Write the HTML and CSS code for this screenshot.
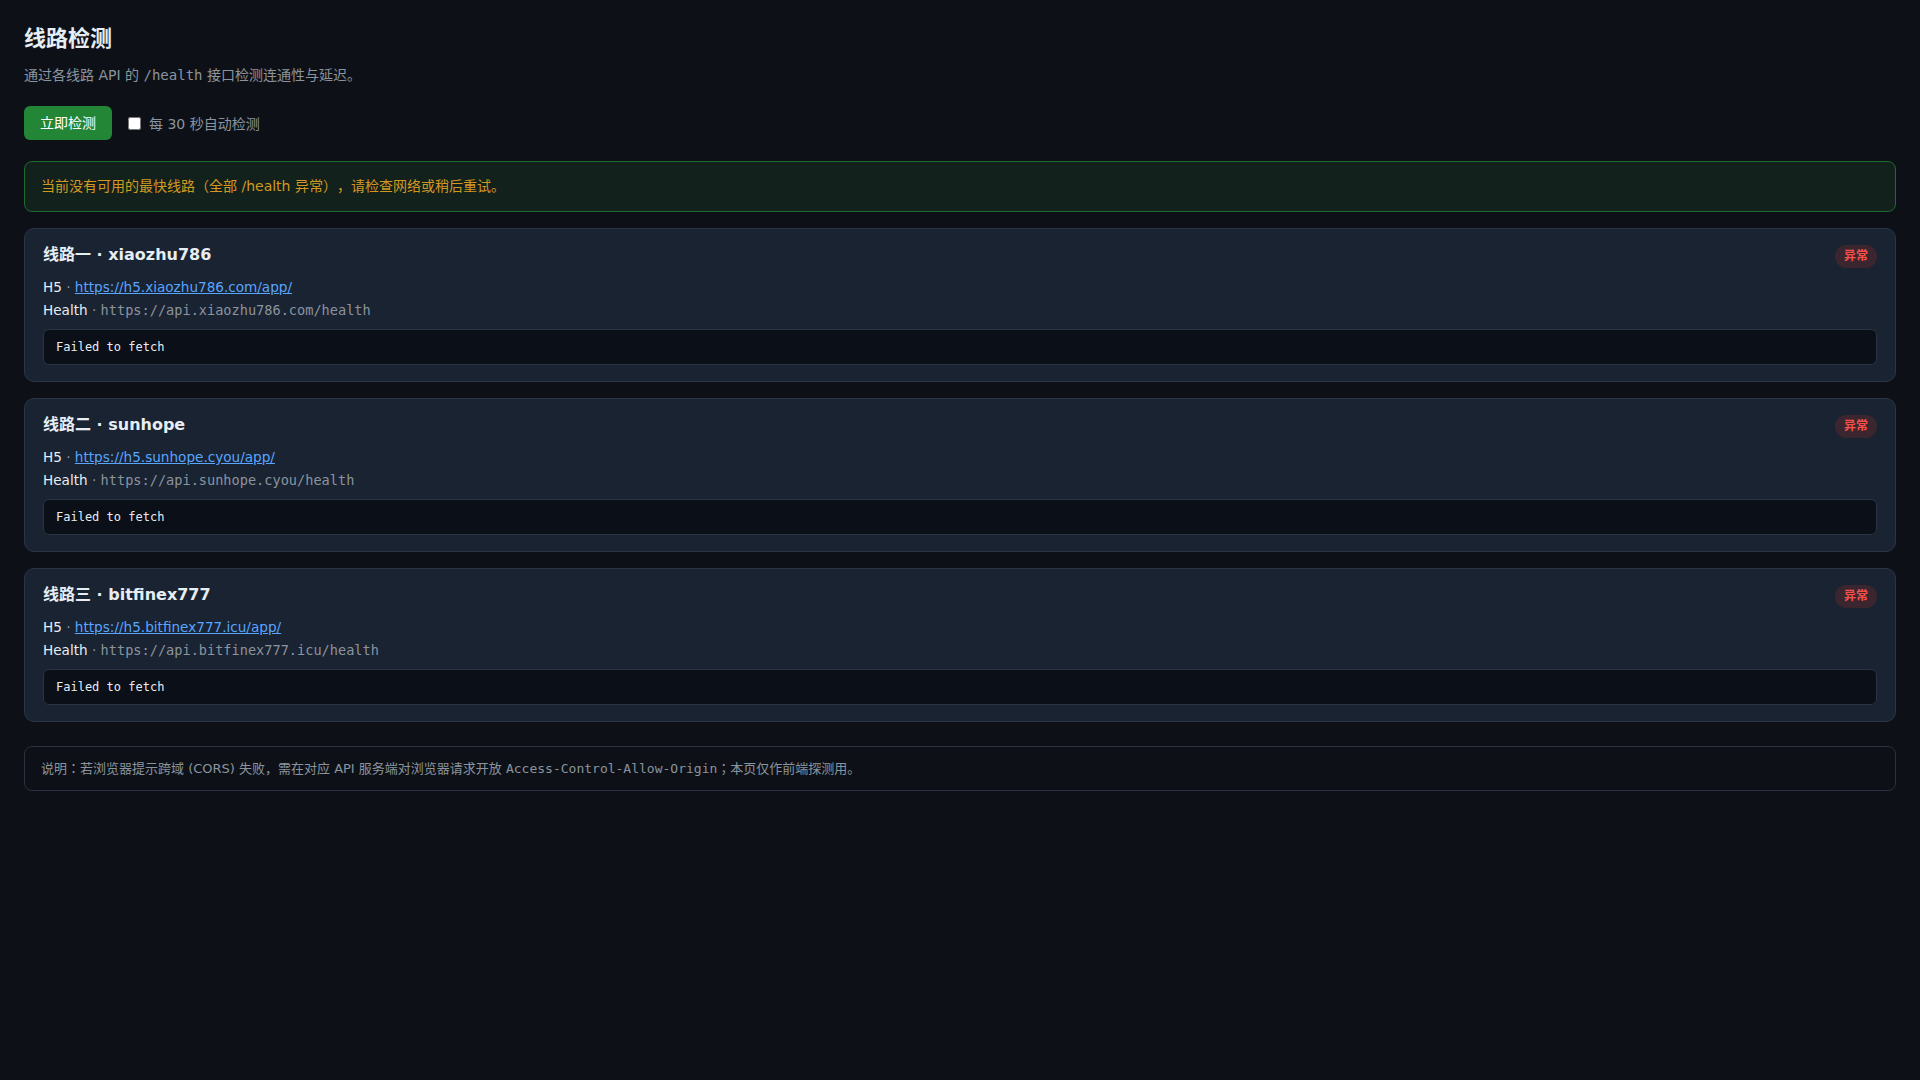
FILE: index.html
```html
<!DOCTYPE html>
<html lang="en">

<head>
    <meta charset="UTF-8">
    <meta name="viewport" content="width=device-width, initial-scale=1.0">
    <title>线路检测</title>
    <link rel="stylesheet" href="styles.css">
</head>

<body>
    <div class="container">
        <h1>线路检测</h1>
        <p class="subtitle">通过各线路 API 的 <code>/health</code> 接口检测连通性与延迟。</p>

        <div class="controls">
            <button id="checkButton">立即检测</button>
            <label class="auto-check">
                <input type="checkbox" id="autoCheck">
                每 30 秒自动检测
            </label>
        </div>

        <!-- Best route notice -->
        <div class="notice">
            当前没有可用的最快线路（全部 /health 异常），请检查网络或稍后重试。
        </div>

        <!-- Route cards -->
        <div class="route-list">
            <div class="route-card">
                <div class="route-head">
                    <h2>线路一 · xiaozhu786</h2>
                    <span class="badge">异常</span>
                </div>
                <div class="route-line">
                    <span class="label">H5</span><span class="sep"> · </span><a href="https://h5.xiaozhu786.com/app/">https://h5.xiaozhu786.com/app/</a>
                </div>
                <div class="route-line">
                    <span class="label">Health</span><span class="sep"> · </span><code>https://api.xiaozhu786.com/health</code>
                </div>
                <pre class="result">Failed to fetch</pre>
            </div>

            <div class="route-card">
                <div class="route-head">
                    <h2>线路二 · sunhope</h2>
                    <span class="badge">异常</span>
                </div>
                <div class="route-line">
                    <span class="label">H5</span><span class="sep"> · </span><a href="https://h5.sunhope.cyou/app/">https://h5.sunhope.cyou/app/</a>
                </div>
                <div class="route-line">
                    <span class="label">Health</span><span class="sep"> · </span><code>https://api.sunhope.cyou/health</code>
                </div>
                <pre class="result">Failed to fetch</pre>
            </div>

            <div class="route-card">
                <div class="route-head">
                    <h2>线路三 · bitfinex777</h2>
                    <span class="badge">异常</span>
                </div>
                <div class="route-line">
                    <span class="label">H5</span><span class="sep"> · </span><a href="https://h5.bitfinex777.icu/app/">https://h5.bitfinex777.icu/app/</a>
                </div>
                <div class="route-line">
                    <span class="label">Health</span><span class="sep"> · </span><code>https://api.bitfinex777.icu/health</code>
                </div>
                <pre class="result">Failed to fetch</pre>
            </div>
        </div>

        <!-- CORS note -->
        <div class="footnote">
            说明：若浏览器提示跨域 (CORS) 失败，需在对应 API 服务端对浏览器请求开放 <code>Access-Control-Allow-Origin</code>；本页仅作前端探测用。
        </div>
    </div>
</body>

</html>
```

FILE: styles.css
```css
/* Dark page, GitHub-like palette */
body {
    margin: 0;
    background: #0d1117;
    color: #e6edf3;
    font-family: "DejaVu Sans", "Noto Sans CJK JP", sans-serif;
    font-size: 14px;
    text-spacing-trim: space-all;
}

code,
pre {
    font-family: "DejaVu Sans Mono", "Noto Sans CJK JP", monospace;
}

.container {
    padding: 24px;
}

h1 {
    margin: 0 0 11px;
    font-size: 22px;
    line-height: 30px;
}

.subtitle {
    margin: 0 0 20px;
    color: #8b949e;
    line-height: 21px;
}

.subtitle code {
    font-size: 14px;
}

/* Check button and auto toggle */
.controls {
    display: flex;
    align-items: center;
    gap: 12px;
    margin-bottom: 21px;
}

.controls button {
    padding: 8px 16px;
    border: none;
    border-radius: 6px;
    background-color: #238636;
    color: #fff;
    font-family: inherit;
    font-size: 14px;
    line-height: 18px;
    cursor: pointer;
}

.controls button:hover {
    background-color: #2ea043;
}

.auto-check {
    display: inline-flex;
    align-items: center;
    gap: 8px;
    color: #8b949e;
}

.auto-check input {
    width: 13px;
    height: 13px;
    margin: 0 0 0 4px;
}

.notice {
    margin-bottom: 16px;
    padding: 14px 16px;
    border: 1px solid #1f6a2e;
    border-radius: 8px;
    background: #12211c;
    color: #d29922;
    line-height: 21px;
}

/* Route cards */
.route-list {
    display: flex;
    flex-direction: column;
    gap: 16px;
}

.route-card {
    padding: 16px 18px;
    border: 1px solid #2a3546;
    border-radius: 10px;
    background-color: #1a2332;
}

.route-head {
    display: flex;
    align-items: flex-start;
    justify-content: space-between;
    margin-bottom: 8px;
}

.route-head h2 {
    margin: 0;
    font-size: 16px;
    line-height: 20px;
}

.badge {
    padding: 4px 9px;
    border-radius: 999px;
    background: #3b2630;
    color: #f85149;
    font-size: 12px;
    font-weight: bold;
    line-height: 15px;
}

.route-line {
    font-size: 13.6px;
    line-height: 23px;
}

.route-line .sep {
    color: #8b949e;
}

.route-line a {
    color: #58a6ff;
}

.route-line code {
    color: #8b949e;
}

.result {
    margin: 7px 0 0;
    padding: 8px 12px;
    border: 1px solid #2a3444;
    border-radius: 6px;
    background: #0b0f17;
    color: #e6edf3;
    font-size: 12px;
    line-height: 18px;
}

.footnote {
    margin-top: 24px;
    padding: 12px 16px;
    border: 1px solid #2a3240;
    border-radius: 8px;
    color: #8b949e;
    font-size: 13px;
    line-height: 19px;
}

.footnote code {
    font-size: 13px;
}
```
